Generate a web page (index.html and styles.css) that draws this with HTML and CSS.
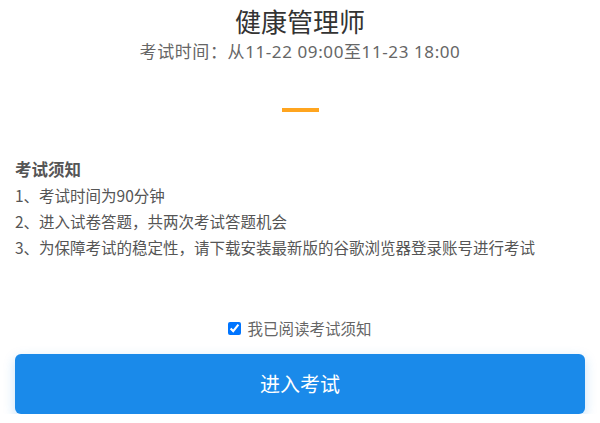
FILE: index.html
```html
<!DOCTYPE html>
<html lang="zh-CN">
<head>
  <meta charset="UTF-8">
  <meta name="viewport" content="width=device-width, initial-scale=1.0">
  <title>健康管理师</title>
  <link rel="stylesheet" href="styles.css">
</head>
<body>
  <div class="page">
    <div class="header">
      <h1 class="title">健康管理师</h1>
      <p class="time">考试时间：从11-22 09:00至11-23 18:00</p>
      <div class="bar"></div>
    </div>

    <div class="notice">
      <h2 class="notice-title">考试须知</h2>
      <p>1、考试时间为90分钟</p>
      <p>2、进入试卷答题，共两次考试答题机会</p>
      <p>3、为保障考试的稳定性，请下载安装最新版的谷歌浏览器登录账号进行考试</p>
    </div>

    <label class="agree">
      <input type="checkbox" checked>
      <span>我已阅读考试须知</span>
    </label>

    <button class="enter">进入考试</button>
  </div>
</body>
</html>
```

FILE: styles.css
```css
body {
  margin: 0;
  background-color: #fff;
  font-family: "Microsoft YaHei", "Noto Sans CJK SC", "Noto Sans", sans-serif;
  color: #555;
}
.page {
  padding: 3px 15px 0;
}
.header {
  text-align: center;
}
.title {
  margin: 0;
  font-size: 26px;
  line-height: 36px;
  font-weight: normal;
  color: #333;
}
.time {
  margin: 1px 0 0;
  font-family: "Noto Sans", "Noto Sans CJK SC", sans-serif;
  font-size: 17px;
  line-height: 24px;
  letter-spacing: 0.6px;
  color: #666;
}
.bar {
  width: 37px;
  height: 4px;
  margin: 44px auto 0;
  background-color: #ffa51f;
}
.notice {
  margin-top: 44px;
  font-size: 15.5px;
  line-height: 26px;
}
.notice-title {
  margin: 0;
  font-size: 16.5px;
  line-height: 26px;
  font-weight: bold;
  color: #555;
}
.notice p {
  margin: 0;
}
.agree {
  display: flex;
  align-items: center;
  justify-content: center;
  gap: 6px;
  margin-top: 56px;
  height: 24px;
  font-size: 15.5px;
  color: #666;
}
.agree input {
  width: 13px;
  height: 13px;
  margin: 0;
}
.enter {
  display: block;
  width: 100%;
  height: 60px;
  margin-top: 14px;
  padding-bottom: 3px;
  border: none;
  border-radius: 6px;
  background-color: #1a8aea;
  color: #fff;
  font-family: inherit;
  font-size: 20px;
  box-shadow: 0 4px 12px rgba(26, 138, 234, 0.25);
  cursor: pointer;
}
```
